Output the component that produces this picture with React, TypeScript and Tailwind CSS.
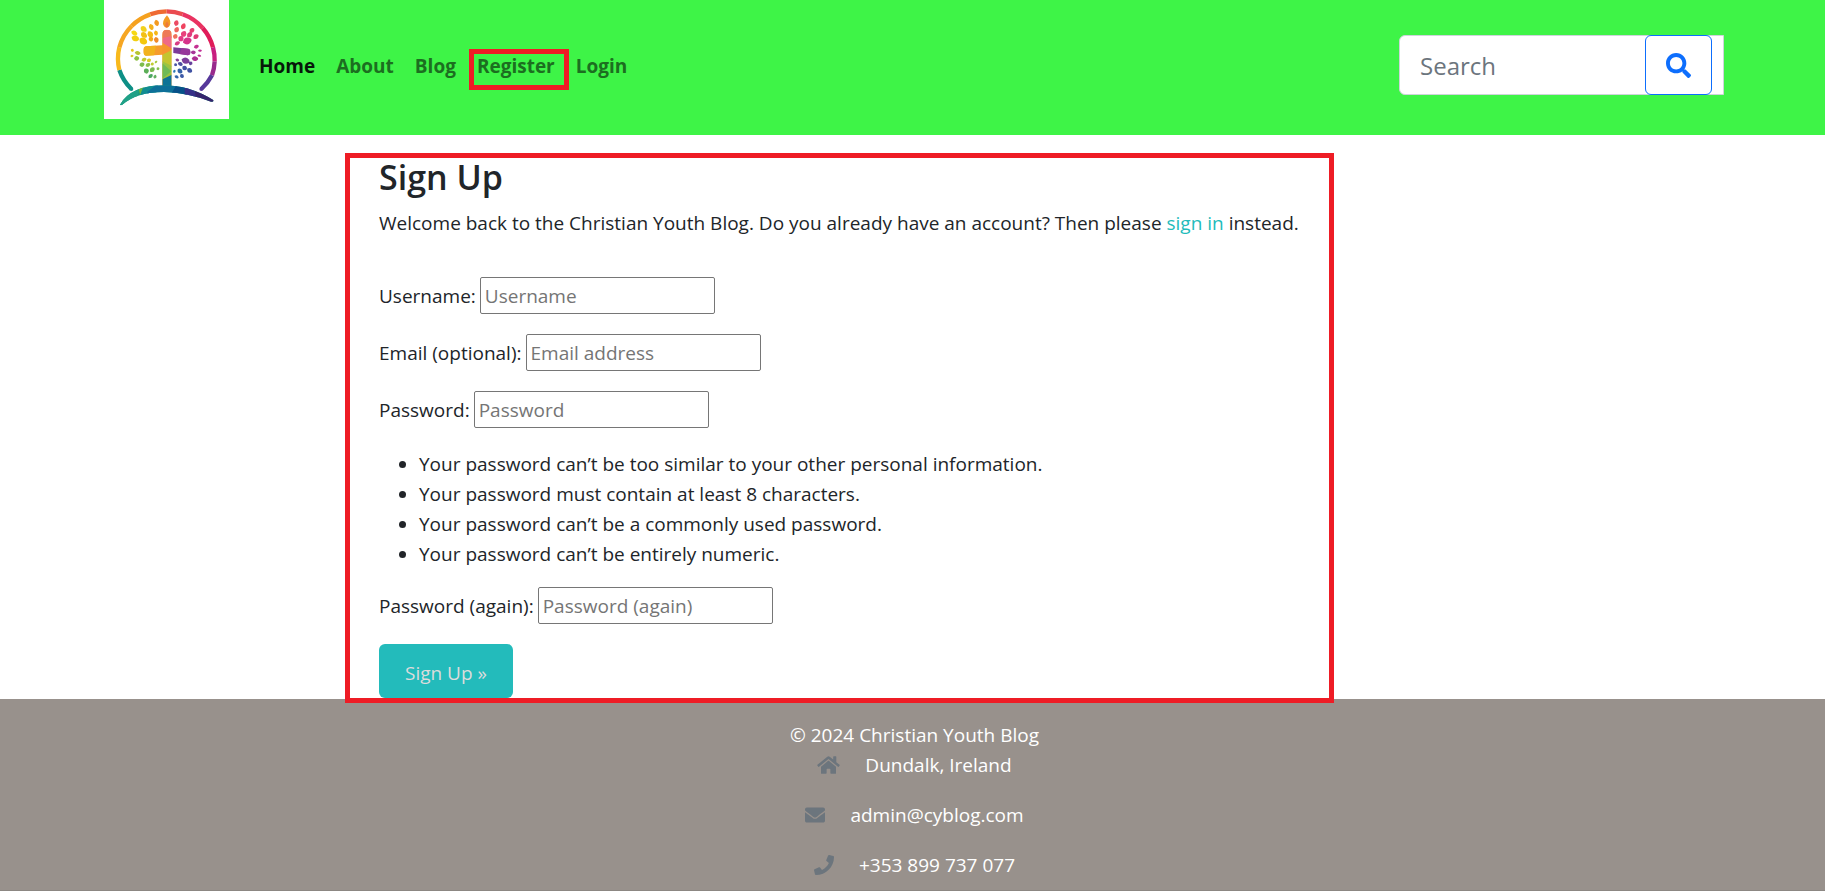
import React from "react";
import { FaSearch, FaHome, FaEnvelope, FaPhone } from "react-icons/fa";

// cx, cy, long radius, short radius, rotation, colour
type Leaf = [number, number, number, number, number, string];

const leaves: Leaf[] = [
  [200, 69, 10, 6, 75, "#f39a1f"],
  [184, 81, 10, 6, 68, "#f4b11c"],
  [161, 87, 11, 7, 40, "#f2d11c"],
  [133, 99, 10, 6, 25, "#f5d814"],
  [181, 103, 11, 7, 60, "#f6bd12"],
  [162, 105, 11, 7, 40, "#f3c015"],
  [136, 115, 12, 8, 20, "#f2cf10"],
  [199, 120, 9, 6, 75, "#f08a2a"],
  [183, 117, 8, 6, 60, "#f5a81c"],
  [160, 123, 13, 9, 30, "#f4c80f"],
  [198, 99, 8, 5, 75, "#f6b517"],
  [127, 151, 5, 4, 20, "#e8c61a"],
  [143, 159, 9, 5, 10, "#b7c532"],
  [126, 168, 5, 3, -10, "#d9c927"],
  [140, 175, 8, 6, -10, "#8fc045"],
  [162, 179, 8, 5, -20, "#c4c92e"],
  [177, 181, 7, 5, -30, "#dccb22"],
  [156, 194, 8, 6, -20, "#7dbb4c"],
  [174, 195, 8, 5, -30, "#8cc047"],
  [198, 186, 5, 3, -45, "#a6c73d"],
  [187, 192, 5, 4, -35, "#c0cb31"],
  [169, 213, 8, 7, -30, "#5cae58"],
  [187, 209, 9, 6, -45, "#7ab94f"],
  [204, 206, 5, 4, -30, "#82bf4c"],
  [182, 228, 8, 5, -40, "#4ba662"],
  [195, 230, 6, 4, -70, "#63b060"],
  [259, 69, 9, 6, -75, "#ec4b63"],
  [280, 79, 10, 6, -65, "#ef4460"],
  [306, 91, 9, 6, -45, "#e83e6e"],
  [260, 89, 9, 6, -60, "#f0655e"],
  [281, 102, 10, 7, -55, "#e8427c"],
  [299, 104, 10, 6, -45, "#df3a7d"],
  [318, 110, 9, 6, -35, "#e13973"],
  [256, 109, 8, 6, -60, "#f0715b"],
  [273, 116, 9, 7, -50, "#e33a85"],
  [292, 123, 14, 9, -20, "#d6338a"],
  [262, 130, 9, 5, -30, "#d83c85"],
  [319, 140, 8, 5, -20, "#c43091"],
  [330, 152, 6, 3, 0, "#c02f94"],
  [310, 157, 8, 5, 0, "#a83598"],
  [328, 167, 6, 3, 15, "#bb2c92"],
  [315, 176, 10, 6, 5, "#ad2e92"],
  [287, 182, 13, 8, 20, "#7c3d9a"],
  [262, 180, 6, 4, 20, "#864097"],
  [302, 190, 6, 5, 30, "#65409b"],
  [271, 192, 8, 5, 25, "#4e4da1"],
  [257, 194, 5, 4, 50, "#4a55a4"],
  [299, 211, 9, 6, 40, "#4152a3"],
  [284, 204, 8, 6, 40, "#4352a3"],
  [270, 213, 9, 6, 45, "#3561a9"],
  [253, 214, 4, 4, 30, "#2d79b4"],
  [276, 228, 7, 5, 50, "#3c59a6"],
  [260, 231, 7, 4, 30, "#3466aa"],
];

const ringArcs: [string, string][] = [
  ["M124 267A145 145 0 0 1 88 210", "#0e8f86"],
  ["M88 210A145 145 0 0 1 88 142", "#f8b91c"],
  ["M88 142A145 145 0 0 1 125 78", "#f6a623"],
  ["M125 78A145 145 0 0 1 181 43", "#f5a11f"],
  ["M181 43A145 145 0 0 1 230 34", "#ef6a32"],
  ["M230 34A145 145 0 0 1 278 43", "#ea4b50"],
  ["M278 43A145 145 0 0 1 338 84", "#e93361"],
  ["M338 84A145 145 0 0 1 369 142", "#e01c59"],
  ["M369 142A145 145 0 0 1 374 184", "#c81f80"],
  ["M374 184A145 145 0 0 1 366 226", "#982a8c"],
  ["M366 226A145 145 0 0 1 334 267", "#57389a"],
];

function Logo() {
  return (
    <svg viewBox="42 0 375 357" className="h-[119px] w-[125px] bg-white" role="img" aria-label="Christian Youth Blog">
      <defs>
        <clipPath id="cross">
          <path d="M217 272V164L168 167Q160 166 160 153Q160 140 168 139L217 136V104Q217 89 231 89Q245 89 245 104V272Z" />
        </clipPath>
        <clipPath id="hill">
          <path d="M90 314Q122 257 220 256Q300 256 371 301Q370 307 363 305Q292 278 222 276Q140 276 96 315Q91 317 90 314Z" />
        </clipPath>
      </defs>
      <g fill="none" strokeWidth="13">
        {ringArcs.map(([d, color]) => (
          <path key={d} d={d} stroke={color} />
        ))}
      </g>
      <circle cx="124" cy="267" r="6" fill="#0e8f86" />
      <circle cx="334" cy="267" r="6" fill="#57389a" />
      {leaves.map(([x, y, rx, ry, turn, color]) => (
        <path
          key={`${x}-${y}`}
          transform={`translate(${x} ${y}) rotate(${turn})`}
          d={`M${-rx} 0Q${-rx * 0.4} ${-ry * 1.8} ${rx * 0.6} ${-ry * 0.8}Q${rx * 1.3} 0 ${rx * 0.6} ${ry * 0.8}Q${-rx * 0.4} ${ry * 1.8} ${-rx} 0Z`}
          fill={color}
        />
      ))}
      <path d="M231 46Q242 60 241 70Q239 83 230 83Q220 82 219 70Q219 60 231 46Z" fill="#f39a25" />
      <path d="M231 64Q238 72 235 81Q230 84 226 80Q224 72 231 64Z" fill="#ee7a3a" />
      <g clipPath="url(#cross)">
        <path d="M150 80H260V280H150Z" fill="#f59c2c" />
        <path d="M217 80H246V114H217Z" fill="#ee7a57" />
        <path d="M217 114L246 108V148L217 128Z" fill="#ef6a86" />
        <path d="M217 128L249 148L217 166Z" fill="#f5952f" />
        <path d="M160 136H198L192 168H160Z" fill="#f2b21d" />
        <path d="M217 164L246 150V200L217 186Z" fill="#c3c52f" />
        <path d="M217 184L246 198V226L217 238Z" fill="#9cc441" />
        <path d="M217 190L244 214L217 236Z" fill="#6fba56" />
        <path d="M217 238L246 224V280H217Z" fill="#0d7396" />
      </g>
      <path d="M250 142L294 146Q301 147 301 156Q301 166 293 166L250 159Z" fill="#7b3a98" />
      <path d="M276 144L294 146Q301 147 301 156Q301 166 293 166L268 162Z" fill="#97379a" />
      <g clipPath="url(#hill)">
        <path d="M80 250H380V320H80Z" fill="#17987f" />
        <path d="M80 300L150 260L140 300L80 330Z" fill="#20a187" />
        <path d="M144 258L164 258L150 284Z" fill="#6fb53f" />
        <path d="M158 264L206 250L196 290H150Z" fill="#118c92" />
        <path d="M172 276L204 250H260V290H172Z" fill="#0e7099" />
        <path d="M242 284L262 250L300 262L288 290Z" fill="#075189" />
        <path d="M284 264L310 264L324 300H284Z" fill="#352f88" />
        <path d="M312 264L380 290V320H324Z" fill="#35246d" />
      </g>
    </svg>
  );
}

const links = ["Home", "About", "Blog", "Register", "Login"];

function Header() {
  return (
    <header className="bg-[#3ef447] pb-[5px]">
      <div className="flex min-h-[130px] items-center pr-[101px] pl-[104px]">
        <a href="#home" className="self-start">
          <Logo />
        </a>
        <nav className="mt-[2px] ml-5 flex gap-px">
          {links.map((name) => (
            <a
              key={name}
              href={`#${name.toLowerCase()}`}
              className={`relative px-[10px] font-bold ${name === "Home" ? "text-[#07180a]" : "text-[#1c6e20]"}`}
            >
              {name}
              {name === "Register" && (
                <span className="pointer-events-none absolute -top-[2px] -right-1 -bottom-[9px] left-[2px] border-5 border-[#ee1c25]" />
              )}
            </a>
          ))}
        </nav>
        <form className="relative ml-auto w-[325px]" onSubmit={(e) => e.preventDefault()}>
          <input
            type="search"
            aria-label="Search"
            placeholder="Search"
            className="block h-[60px] w-full rounded-l-md border border-[#ced4da] bg-white pr-20 pl-5 text-[24px] text-[#212529] outline-none placeholder:text-[#6c757d]"
          />
          <button
            type="submit"
            aria-label="Submit search"
            className="absolute inset-y-0 right-3 flex w-[67px] items-center justify-center rounded-md border border-[#0d6efd] bg-white text-[25px] text-[#0d6efd]"
          >
            <FaSearch />
          </button>
        </form>
      </div>
    </header>
  );
}

function Field({ id, label, placeholder, type }: { id: string; label: string; placeholder: string; type: string }) {
  return (
    <div className="flex items-center gap-1">
      <label htmlFor={id}>{label}</label>
      <input
        id={id}
        type={type}
        placeholder={placeholder}
        className="h-[37px] w-[235px] rounded-[2px] border border-[#767676] bg-white px-1 outline-none placeholder:text-[#757575]"
      />
    </div>
  );
}

const rules = [
  "Your password can’t be too similar to your other personal information.",
  "Your password must contain at least 8 characters.",
  "Your password can’t be a commonly used password.",
  "Your password can’t be entirely numeric.",
];

const contacts = [
  { text: "Dundalk, Ireland", icon: <FaHome className="h-5 w-[23px]" /> },
  { text: "admin@cyblog.com", icon: <FaEnvelope className="h-5 w-5" /> },
  { text: "+353 899 737 077", icon: <FaPhone className="h-5 w-5" /> },
];

export default function App() {
  return (
    <div className="flex min-h-screen flex-col bg-white font-['Open_Sans',sans-serif] text-[19px] leading-[30px] text-[#212529]">
      <Header />
      <main className="grid grid-cols-[345fr_989fr_491fr]">
        <section className="relative z-10 col-start-2 mt-[18px] -mb-1 border-5 border-[#ee1c25] pl-[29px]">
          <h1 className="text-[34px] leading-[38px] font-semibold">Sign Up</h1>
          <p className="mt-3">
            Welcome back to the Christian Youth Blog. Do you already have an account? Then please{" "}
            <a href="#login" className="text-[#23bbbb]">
              sign in
            </a>{" "}
            instead.
          </p>
          <form className="mt-[39px]" onSubmit={(e) => e.preventDefault()}>
            <div className="flex flex-col gap-5">
              <Field id="username" label="Username:" placeholder="Username" type="text" />
              <Field id="email" label="Email (optional):" placeholder="Email address" type="email" />
              <Field id="password" label="Password:" placeholder="Password" type="password" />
            </div>
            <ul className="mt-[21px] mb-[18px] list-disc pl-10">
              {rules.map((rule) => (
                <li key={rule}>{rule}</li>
              ))}
            </ul>
            <Field id="password-again" label="Password (again):" placeholder="Password (again)" type="password" />
            <button type="submit" className="mt-5 block h-[54px] rounded-md bg-[#23bbbb] px-[26px] pt-1 text-[#dcdcdc]">
              Sign Up »
            </button>
          </form>
        </section>
      </main>
      <footer className="flex flex-1 flex-col items-center border-b border-[#8c8783] bg-[#98918c] pt-[21px] pl-1 text-white">
        <p>© 2024 Christian Youth Blog</p>
        <address className="flex flex-col items-center gap-5 not-italic">
          {contacts.map(({ text, icon }) => (
            <p key={text} className="flex items-center gap-[25px]">
              <span className="text-[#6c757d]">{icon}</span>
              {text}
            </p>
          ))}
        </address>
      </footer>
    </div>
  );
}
